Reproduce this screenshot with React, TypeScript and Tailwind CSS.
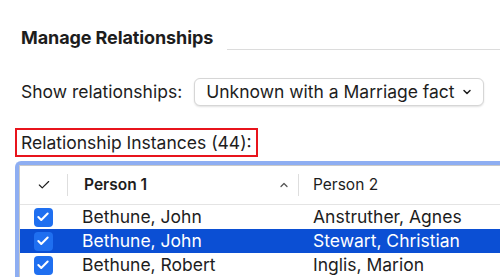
import { Check, ChevronDown, ChevronUp } from 'lucide-react';

const rows = [
  { p1: 'Bethune, John', p2: 'Anstruther, Agnes', selected: false },
  { p1: 'Bethune, John', p2: 'Stewart, Christian', selected: true },
  { p1: 'Bethune, Robert', p2: 'Inglis, Marion', selected: false },
];

const CheckBox = () => (
  <span className="flex h-[19px] w-[19px] items-center justify-center rounded-[4px] bg-[#1f6ff0]">
    <Check className="h-[14px] w-[14px] text-white" strokeWidth={3.5} />
  </span>
);

export default function App() {
  return (
    <div className="h-[277px] w-[500px] overflow-hidden bg-white font-['Inter','Liberation_Sans',sans-serif] text-[#1d1d1d]">
      <div className="flex items-end gap-[14px] pl-[21px] pt-[27px]">
        <h2 className="text-[18px] font-bold leading-[22px] tracking-[-0.1px]">Manage Relationships</h2>
        <div className="mb-[-1px] h-px flex-1 bg-[#dcdcdc]" />
      </div>

      <div className="mt-[29px] flex items-center pl-[21px]">
        <span className="text-[17.5px] leading-[20px]">Show relationships:</span>
        <button className="ml-[12px] flex h-[28px] w-[290px] items-center justify-between whitespace-nowrap rounded-[6px] border border-[#d6d6d6] bg-white pl-[11px] pr-[10px] text-[17.5px] leading-[20px] shadow-[0_1px_2px_rgba(0,0,0,0.12)]">
          <span>Unknown with a Marriage fact</span>
          <ChevronDown className="h-[12px] w-[12px]" strokeWidth={3} />
        </button>
      </div>

      <div className="ml-[15px] mt-[22px] inline-flex h-[29px] items-center border-2 border-[#e8141c] pl-[4px] pr-[4px]">
        <span className="text-[17.5px] leading-[20px]">Relationship Instances (44):</span>
      </div>

      <div className="ml-[15px] mt-[4px] rounded-tl-[6px] border-l-[4px] border-t-[4px] border-[#8eaef2]">
        <div className="border-l border-t border-[#c9c9c9] bg-white">
          <div className="flex h-[39px] items-center border-b border-[#e4e4e4] text-[15.5px]">
            <div className="flex w-[47px] justify-center">
              <Check className="h-[14px] w-[14px]" strokeWidth={2} />
            </div>
            <div className="h-[22px] w-px bg-[#dedede]" />
            <div className="flex w-[230px] items-center justify-between pl-[16px] pr-[8px] font-semibold">
              <span>Person 1</span>
              <ChevronUp className="h-[12px] w-[12px] text-[#555]" strokeWidth={2.5} />
            </div>
            <div className="h-[22px] w-px bg-[#dedede]" />
            <div className="pl-[14px]">Person 2</div>
          </div>
          {rows.map((r, i) => (
            <div
              key={i}
              className={`flex h-[24px] items-center text-[17.5px] leading-[20px] ${r.selected ? 'bg-[#0b4fd4] text-white' : ''}`}
            >
              <div className="flex w-[45px] justify-center pl-[1px]">
                <CheckBox />
              </div>
              <div className="w-[233px] pl-[17px]">{r.p1}</div>
              <div className="pl-[15px]">{r.p2}</div>
            </div>
          ))}
        </div>
      </div>
    </div>
  );
}
